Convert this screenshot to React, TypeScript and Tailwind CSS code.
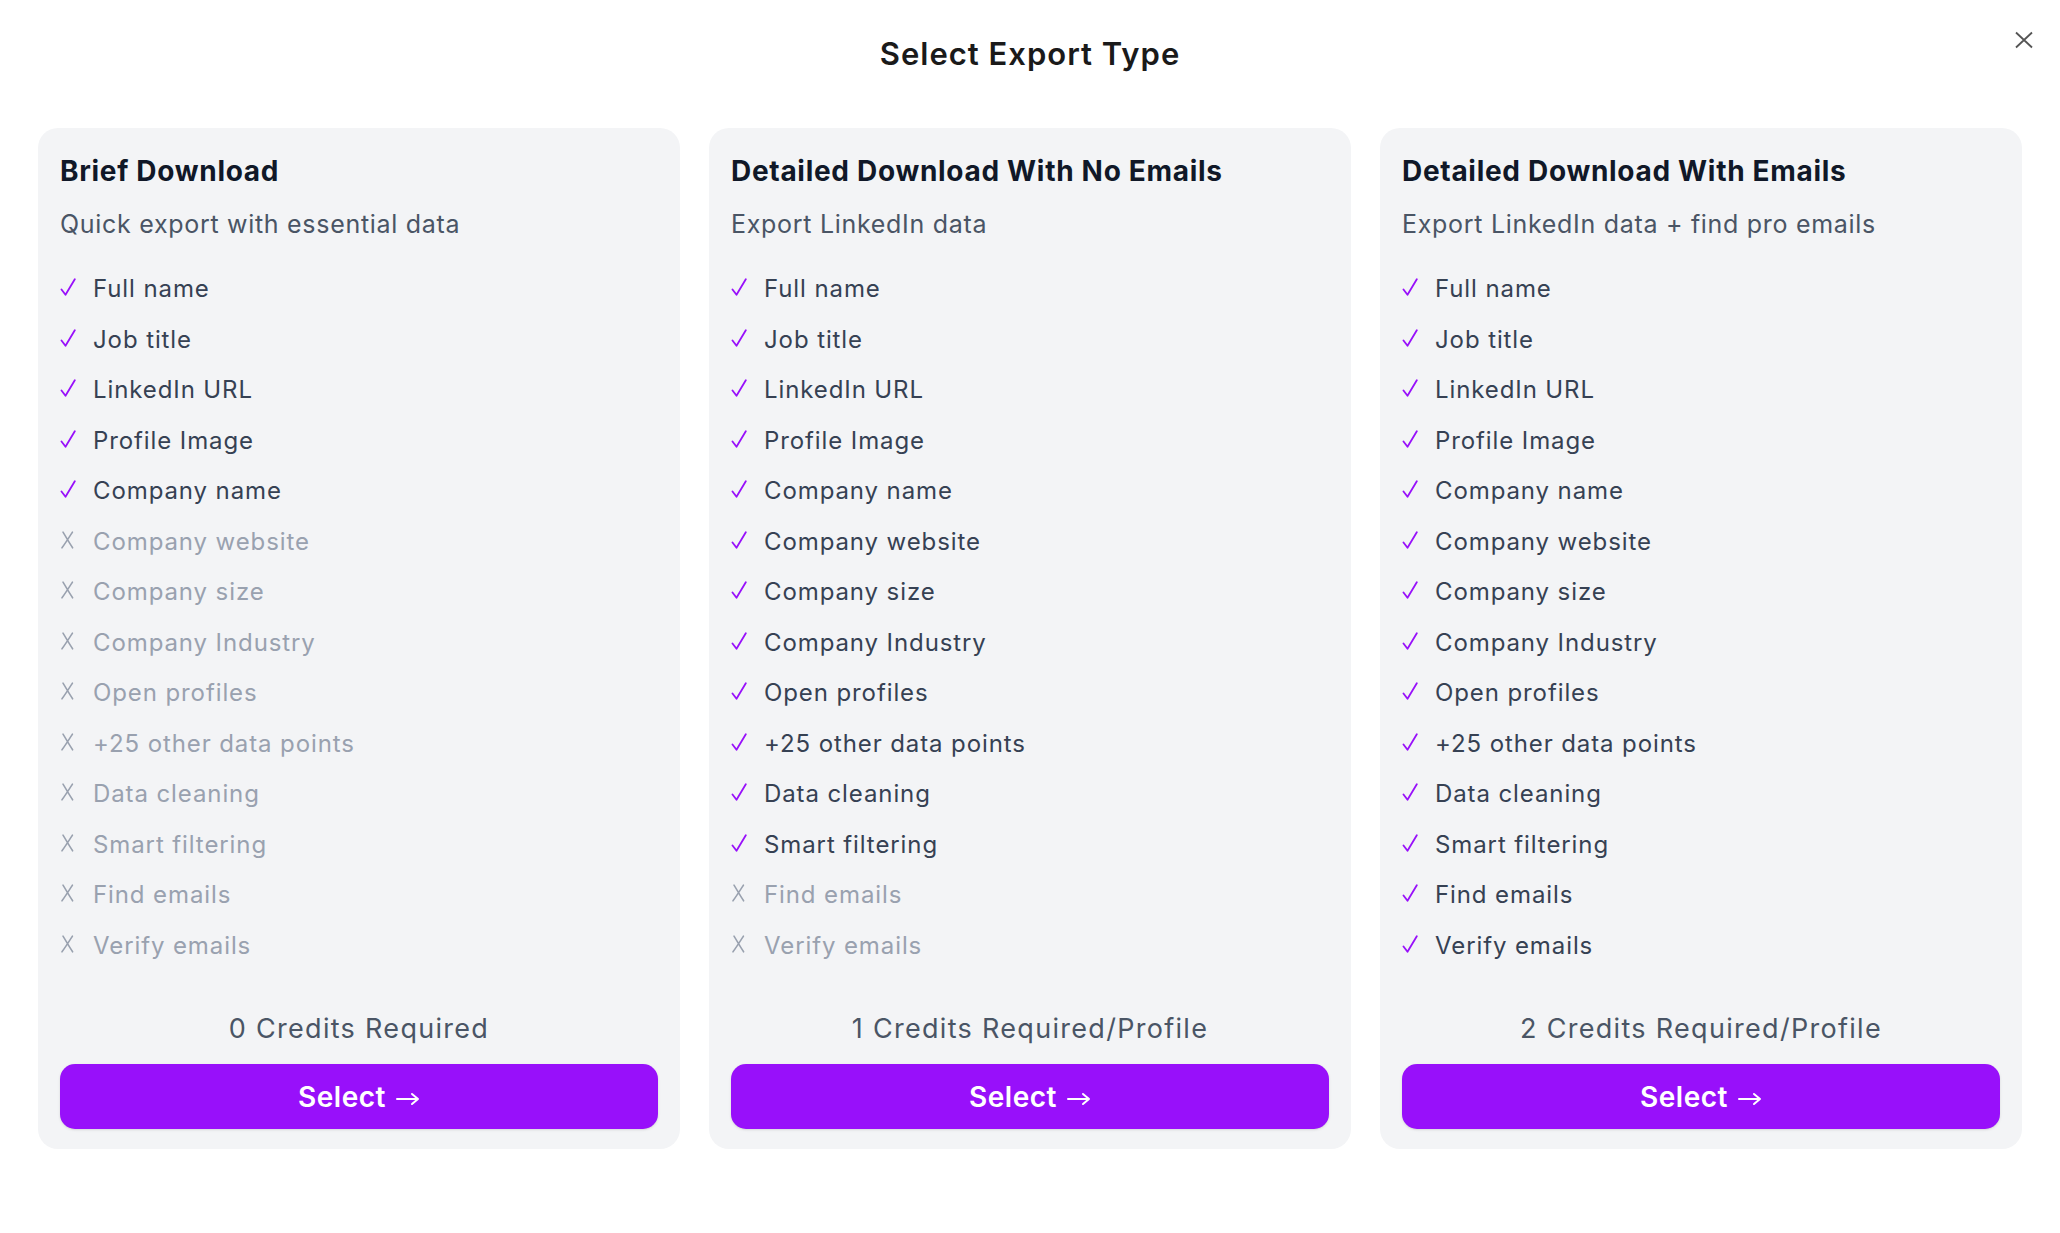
import React from 'react';

type Option = {
  title: string;
  subtitle: string;
  included: number;
  credits: string;
};

const FEATURES = [
  'Full name',
  'Job title',
  'LinkedIn URL',
  'Profile Image',
  'Company name',
  'Company website',
  'Company size',
  'Company Industry',
  'Open profiles',
  '+25 other data points',
  'Data cleaning',
  'Smart filtering',
  'Find emails',
  'Verify emails',
];

const OPTIONS: Option[] = [
  {
    title: 'Brief Download',
    subtitle: 'Quick export with essential data',
    included: 5,
    credits: '0 Credits Required',
  },
  {
    title: 'Detailed Download With No Emails',
    subtitle: 'Export LinkedIn data',
    included: 12,
    credits: '1 Credits Required/Profile',
  },
  {
    title: 'Detailed Download With Emails',
    subtitle: 'Export LinkedIn data + find pro emails',
    included: 14,
    credits: '2 Credits Required/Profile',
  },
];

function CheckMark() {
  return (
    <svg width="16" height="18" viewBox="0 0 16 18" fill="none" stroke="#9810fa" strokeWidth="1.8" strokeLinecap="round" strokeLinejoin="round" className="inline align-[1px]">
      <path d="M1.5 11.5L5.5 16.8L14.8 1.2" />
    </svg>
  );
}

function CrossMark() {
  return (
    <svg width="15" height="18" viewBox="0 0 15 18" fill="none" stroke="#99a1af" strokeWidth="1.6" strokeLinecap="round" className="inline align-[1px]">
      <path d="M3 1.2C6 6 9 11.5 12.6 16.8M12.4 1.2C9 6.5 5.5 12 2 16.8" />
    </svg>
  );
}

function ExportCard({ option }: { option: Option }) {
  return (
    <div className="flex-1 flex flex-col rounded-[20px] bg-[#f3f4f6] px-[22px] pt-[25px] pb-[20px]">
      <h2 className="text-[28px] leading-[36px] font-bold tracking-[0.7px] text-[#101828]">{option.title}</h2>
      <p className="mt-[17px] text-[25px] leading-[36px] tracking-[0.7px] text-[#4a5565]">{option.subtitle}</p>

      {/* Feature list */}
      <ul className="mt-[29px] flex flex-col">
        {FEATURES.map((feature, i) => {
          const on = i < option.included;
          return (
            <li key={feature} className="flex items-baseline h-[50.5px] text-[24px] leading-[36px] tracking-[0.9px]">
              <span className="w-[33px] shrink-0">{on ? <CheckMark /> : <CrossMark />}</span>
              <span className={on ? 'text-[#364153]' : 'text-[#99a1af]'}>{feature}</span>
            </li>
          );
        })}
      </ul>

      <div className="mt-auto text-center text-[27px] leading-[36px] tracking-[1.3px] text-[#4a5565]">{option.credits}</div>
      <button className="mt-[17px] h-[65px] w-full flex items-center justify-center gap-[10px] rounded-[15px] bg-[#9810fa] text-white text-[28px] leading-none font-semibold tracking-[0.5px] shadow-sm">
        <span>Select</span>
        <svg width="24" height="14" viewBox="0 0 24 14" fill="none" stroke="currentColor" strokeWidth="2" strokeLinecap="round" strokeLinejoin="round" className="mt-[4px]">
          <path d="M1 7h21M16 2l6 5-6 5" />
        </svg>
      </button>
    </div>
  );
}

export default function App() {
  return (
    <div className="relative w-[2060px] h-[1233px] bg-white font-['Inter','Liberation_Sans',sans-serif]">
      <button className="absolute top-[28px] right-[24px] p-[2px] text-[#555]" aria-label="Close">
        <svg width="20" height="20" viewBox="0 0 20 20" fill="none" stroke="currentColor" strokeWidth="1.8">
          <path d="M2 2.5l16 15M18 2.5L2 17.5" />
        </svg>
      </button>

      <h1 className="pt-[34px] text-center text-[31px] leading-[40px] font-semibold tracking-[1px] text-[#1a1a1a]">
        Select Export Type
      </h1>

      <div className="mt-[54px] flex gap-[29px] px-[38px] h-[1021px]">
        {OPTIONS.map((o) => (
          <ExportCard key={o.title} option={o} />
        ))}
      </div>
    </div>
  );
}
